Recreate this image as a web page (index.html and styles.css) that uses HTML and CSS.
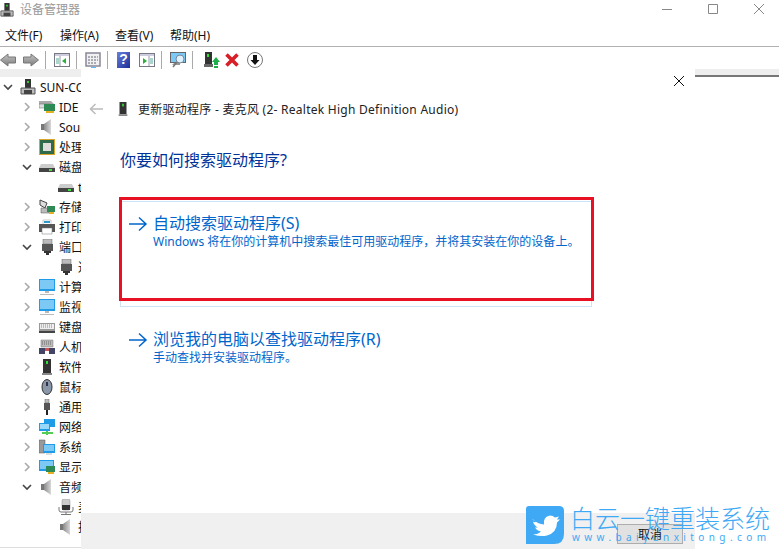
FILE: index.html
```html
<!DOCTYPE html>
<html lang="zh-CN">
<head>
  <meta charset="UTF-8">
  <title>设备管理器</title>
  <link rel="stylesheet" href="styles.css">
</head>
<body>
  <svg class="sprites" width="0" height="0">
    <defs>
      <linearGradient id="g-arrow" x1="0" y1="0" x2="0" y2="1"><stop offset="0" stop-color="#c4c4c4"/><stop offset="1" stop-color="#7d7d7d"/></linearGradient>
      <linearGradient id="g-help" x1="0" y1="0" x2="1" y2="1"><stop offset="0" stop-color="#6a80dc"/><stop offset="1" stop-color="#1b2f96"/></linearGradient>
      <linearGradient id="g-speaker" x1="0" y1="0" x2="1" y2="0"><stop offset="0" stop-color="#8a8a8a"/><stop offset="1" stop-color="#d8d8d8"/></linearGradient>
    </defs>
    <symbol id="i-pc" viewBox="0 0 16 16"><rect x="5" y="0" width="6" height="9" fill="#333"/><rect x="7" y="2" width="2" height="2" fill="#3c3"/><path d="M1 9h14v6H1z" fill="#bbb" stroke="#555"/><path d="M4 11h8v4H4z" fill="#444"/></symbol>
    <symbol id="i-tower" viewBox="0 0 16 16"><path d="M4 0h8v14H4z" fill="#333"/><rect x="7" y="2" width="2" height="3" fill="#3d3"/><path d="M3 14h10v2H3z" fill="#888"/></symbol>
    <symbol id="i-ide" viewBox="0 0 16 16"><path d="M0 2h12l3 3H0z" fill="#aaa"/><path d="M0 5h11v4H0z" fill="#ddd" stroke="#666" stroke-width=".5"/><rect x="5" y="5" width="11" height="7" fill="#2d8a55"/><rect x="7" y="12" width="8" height="2" fill="#e8b020"/></symbol>
    <symbol id="i-speaker" viewBox="0 0 16 16"><path d="M2 5h3v6H2z" fill="#777"/><path d="M5 5l7-5v16l-7-5z" fill="url(#g-speaker)"/></symbol>
    <symbol id="i-cpu" viewBox="0 0 16 16"><rect x="0" y="0" width="16" height="16" fill="#d9a52c"/><rect x="1" y="1" width="14" height="14" fill="#2f6b4a"/><rect x="4" y="4" width="8" height="8" fill="#ddd"/></symbol>
    <symbol id="i-disk" viewBox="0 0 16 16"><path d="M2 5h12l2 4H0z" fill="#ccc"/><path d="M0 9h16v4H0z" fill="#444"/><rect x="10" y="10" width="3" height="2" fill="#4d4"/></symbol>
    <symbol id="i-storage" viewBox="0 0 16 16"><path d="M1 1l7 3-2 5-5-3z" fill="#ddd" stroke="#444"/><path d="M2 9h8v5H2z" fill="#bbb" stroke="#555" stroke-width=".5"/><rect x="8" y="7" width="8" height="6" fill="#2d8a55"/><rect x="10" y="13" width="5" height="2" fill="#e8b020"/></symbol>
    <symbol id="i-printer" viewBox="0 0 16 16"><path d="M4 1h8v5H4z" fill="#fff" stroke="#999" stroke-width=".5"/><path d="M5 2h6v2H5z" fill="#39c"/><path d="M0 5h16v8H0z" fill="#555"/><path d="M3 9h10v6H3z" fill="#fff" stroke="#777" stroke-width=".5"/></symbol>
    <symbol id="i-port" viewBox="0 0 16 16"><path d="M4 0h9v5H4z" fill="#bbb" stroke="#666" stroke-width=".5"/><path d="M3 5h11v7H3z" fill="#555"/><path d="M5 12h7v2H5zM7 14h3v2H7z" fill="#333"/></symbol>
    <symbol id="i-monitor" viewBox="0 0 16 16"><rect x="0" y="0" width="16" height="12" fill="#1f9be8"/><rect x="1" y="1" width="14" height="9" fill="#7cc9f5"/><path d="M6 12h4v2H6zM1 15h14v1H1z" fill="#bbb"/></symbol>
    <symbol id="i-keyboard" viewBox="0 0 16 16"><path d="M0 4h16v9H0z" fill="#999"/><path d="M1 5h14v5H1z" fill="#eee"/><path d="M2 6h12M2 8h12" stroke="#888" stroke-dasharray="1 1"/><path d="M0 12h16v2H0z" fill="#444"/></symbol>
    <symbol id="i-hid" viewBox="0 0 16 16"><path d="M2 1h12v7H2z" fill="#bbb" stroke="#777" stroke-width=".5"/><path d="M3 3h10M3 5h10" stroke="#666" stroke-dasharray="1 1"/><path d="M0 9h6v6H0zM10 9h6v6h-6z" fill="#446"/><path d="M6 9h4v3H6z" fill="#c55"/></symbol>
    <symbol id="i-mouse" viewBox="0 0 16 16"><ellipse cx="8" cy="8" rx="5" ry="7.5" fill="#8a97a8" stroke="#333"/><rect x="7" y="3" width="2" height="4" fill="#334"/></symbol>
    <symbol id="i-usb" viewBox="0 0 16 16"><path d="M6 0h4v4H6z" fill="#bbb" stroke="#666" stroke-width=".5"/><path d="M5 4h6v7H5z" fill="#555"/><path d="M7 11h2v5H7z" fill="#222"/></symbol>
    <symbol id="i-net" viewBox="0 0 16 16"><rect x="5" y="0" width="11" height="8" fill="#1f9be8"/><rect x="0" y="4" width="11" height="8" fill="#1f9be8"/><rect x="1" y="5" width="9" height="5" fill="#9ad8fa"/><path d="M3 14h11M8 12v4" stroke="#5c5" stroke-width="2"/></symbol>
    <symbol id="i-sys" viewBox="0 0 16 16"><path d="M0 1h6v13H0z" fill="#999" stroke="#555" stroke-width=".5"/><rect x="4" y="5" width="12" height="9" fill="#1f9be8"/><rect x="5" y="6" width="10" height="6" fill="#7cc9f5"/><path d="M7 15h6" stroke="#bbb"/></symbol>
    <symbol id="i-display" viewBox="0 0 16 16"><rect x="0" y="1" width="15" height="11" fill="#1f9be8"/><rect x="1" y="2" width="13" height="8" fill="#7cc9f5"/><rect x="7" y="7" width="9" height="6" fill="#2d8a55"/><rect x="9" y="13" width="6" height="2" fill="#e8b020"/></symbol>
    <symbol id="i-mic" viewBox="0 0 16 16"><rect x="4" y="0" width="8" height="11" rx="2" fill="#ccc" stroke="#888" stroke-width=".5"/><rect x="4" y="6" width="8" height="5" fill="#333"/><path d="M1 8v3q0 2 2 2h10q2 0 2-2V8M8 13v2M3 15.5h10" fill="none" stroke="#777"/></symbol>
    <symbol id="i-back" viewBox="0 0 16 16"><path d="M.5 8L8 2v3h7.5v6H8v3z" fill="url(#g-arrow)" stroke="#777"/></symbol>
    <symbol id="i-forward" viewBox="0 0 16 16"><path d="M15.5 8L8 2v3H.5v6H8v3z" fill="url(#g-arrow)" stroke="#777"/></symbol>
    <symbol id="i-pane" viewBox="0 0 16 16"><rect x=".5" y="1.5" width="15" height="13" fill="#fff" stroke="#778"/><path d="M1 2h14v2H1z" fill="#ccd"/><path d="M6 4v10" stroke="#99a"/><path d="M2 7h3M2 9h3M2 11h3" stroke="#5a9"/><path d="M12 6v6l-4-3z" fill="#2fae3f"/></symbol>
    <symbol id="i-pane-r" viewBox="0 0 16 16"><rect x=".5" y="1.5" width="15" height="13" fill="#fff" stroke="#778"/><path d="M1 2h14v2H1z" fill="#ccd"/><path d="M10 4v10" stroke="#99a"/><path d="M4 6v6l4-3z" fill="#2fae3f"/><path d="M11 7h3M11 9h3M11 11h3" stroke="#5a9"/></symbol>
    <symbol id="i-props" viewBox="0 0 16 16"><rect x="1" y="1" width="14" height="13" fill="#f1f1f1" stroke="#889" stroke-width="1.5"/><path d="M3 5h10M3 8h10M3 11h8" stroke="#667" stroke-dasharray="2 1"/><path d="M6 15h5v1H6z" fill="#5bf"/></symbol>
    <symbol id="i-help" viewBox="0 0 13 16"><rect width="13" height="16" fill="url(#g-help)"/></symbol>
    <symbol id="i-scan" viewBox="0 0 16 16"><rect x=".5" y=".5" width="15" height="10" fill="#7cc9f5" stroke="#666"/><path d="M4 11h6v2H2z" fill="#999"/><circle cx="10" cy="7" r="4" fill="#dff2fc" stroke="#789"/><path d="M7 10l-4 5" stroke="#777" stroke-width="1.5"/></symbol>
    <symbol id="i-update" viewBox="0 0 16 16"><path d="M1 0h7v12H1z" fill="#333"/><rect x="3" y="2" width="2" height="3" fill="#3d3"/><path d="M0 12h9v3H0z" fill="#666"/><path d="M12 5l4 5h-2v3h-4v-3H8zM10 14h4v2h-4z" fill="#1cb04a"/></symbol>
    <symbol id="i-remove" viewBox="0 0 16 16"><path d="M2.5 2.5l11 11M13.5 2.5l-11 11" stroke="#d81e26" stroke-width="3.6"/></symbol>
    <symbol id="i-disable" viewBox="0 0 16 16"><circle cx="8" cy="8" r="7.5" fill="#fff" stroke="#777"/><path d="M6 3h4v5h2.5L8 13 3.5 8H6z" fill="#111"/></symbol>
    <symbol id="i-arrow" viewBox="0 0 20 16"><path d="M1 8h17M11 1.5L18 8l-7 6.5" fill="none" stroke="currentColor" stroke-width="1.5"/></symbol>
    <symbol id="i-caret-r" viewBox="0 0 16 16"><path d="M6 4l4 4-4 4" fill="none" stroke="#aaa" stroke-width="1.6"/></symbol>
    <symbol id="i-caret-d" viewBox="0 0 16 16"><path d="M4 6l4 4 4-4" fill="none" stroke="#444" stroke-width="1.6"/></symbol>
  </svg>

  <header class="titlebar">
    <div class="title">
      <svg class="title-icon"><use href="#i-pc"/></svg>
      <span>设备管理器</span>
    </div>
    <div class="win-controls">
      <svg viewBox="0 0 10 10"><path d="M0 5.5h10"/></svg>
      <svg viewBox="0 0 10 10"><path d="M.5 .5h9v9h-9z"/></svg>
      <svg viewBox="0 0 10 10"><path d="M0 0l10 10M10 0L0 10"/></svg>
    </div>
  </header>

  <nav class="menubar">
    <span>文件(F)</span>
    <span>操作(A)</span>
    <span>查看(V)</span>
    <span>帮助(H)</span>
  </nav>

  <div class="toolbar">
    <svg class="tool"><use href="#i-back"/></svg>
    <svg class="tool"><use href="#i-forward"/></svg>
    <i class="sep"></i>
    <svg class="tool"><use href="#i-pane"/></svg>
    <i class="sep"></i>
    <svg class="tool"><use href="#i-props"/></svg>
    <i class="sep"></i>
    <div class="help-btn"><svg class="tool-help"><use href="#i-help"/></svg><b>?</b></div>
    <svg class="tool"><use href="#i-pane-r"/></svg>
    <i class="sep"></i>
    <svg class="tool"><use href="#i-scan"/></svg>
    <i class="sep"></i>
    <svg class="tool update"><use href="#i-update"/></svg>
    <svg class="tool remove"><use href="#i-remove"/></svg>
    <svg class="tool"><use href="#i-disable"/></svg>
  </div>

  <main class="workspace">
    <aside class="left">
      <div class="strip"></div>
      <ul class="tree">
        <li class="lv0"><svg class="caret"><use href="#i-caret-d"/></svg><svg class="ico"><use href="#i-pc"/></svg><span>SUN-COMPUTER</span></li>
        <li class="lv1"><svg class="caret"><use href="#i-caret-r"/></svg><svg class="ico"><use href="#i-ide"/></svg><span>IDE ATA/ATAPI</span></li>
        <li class="lv1"><svg class="caret"><use href="#i-caret-r"/></svg><svg class="ico"><use href="#i-speaker"/></svg><span>Sound</span></li>
        <li class="lv1"><svg class="caret"><use href="#i-caret-r"/></svg><svg class="ico"><use href="#i-cpu"/></svg><span>处理器</span></li>
        <li class="lv1"><svg class="caret"><use href="#i-caret-d"/></svg><svg class="ico"><use href="#i-disk"/></svg><span>磁盘驱动器</span></li>
        <li class="lv2"><svg class="caret"></svg><svg class="ico"><use href="#i-disk"/></svg><span>t</span></li>
        <li class="lv1"><svg class="caret"><use href="#i-caret-r"/></svg><svg class="ico"><use href="#i-storage"/></svg><span>存储控制器</span></li>
        <li class="lv1"><svg class="caret"><use href="#i-caret-r"/></svg><svg class="ico"><use href="#i-printer"/></svg><span>打印队列</span></li>
        <li class="lv1"><svg class="caret"><use href="#i-caret-d"/></svg><svg class="ico"><use href="#i-port"/></svg><span>端口</span></li>
        <li class="lv2"><svg class="caret"></svg><svg class="ico"><use href="#i-port"/></svg><span>通信端口</span></li>
        <li class="lv1"><svg class="caret"><use href="#i-caret-r"/></svg><svg class="ico"><use href="#i-monitor"/></svg><span>计算机</span></li>
        <li class="lv1"><svg class="caret"><use href="#i-caret-r"/></svg><svg class="ico"><use href="#i-monitor"/></svg><span>监视器</span></li>
        <li class="lv1"><svg class="caret"><use href="#i-caret-r"/></svg><svg class="ico"><use href="#i-keyboard"/></svg><span>键盘</span></li>
        <li class="lv1"><svg class="caret"><use href="#i-caret-r"/></svg><svg class="ico"><use href="#i-hid"/></svg><span>人机接口</span></li>
        <li class="lv1"><svg class="caret"><use href="#i-caret-r"/></svg><svg class="ico"><use href="#i-tower"/></svg><span>软件设备</span></li>
        <li class="lv1"><svg class="caret"><use href="#i-caret-r"/></svg><svg class="ico"><use href="#i-mouse"/></svg><span>鼠标</span></li>
        <li class="lv1"><svg class="caret"><use href="#i-caret-r"/></svg><svg class="ico"><use href="#i-usb"/></svg><span>通用串行</span></li>
        <li class="lv1"><svg class="caret"><use href="#i-caret-r"/></svg><svg class="ico"><use href="#i-net"/></svg><span>网络适配器</span></li>
        <li class="lv1"><svg class="caret"><use href="#i-caret-r"/></svg><svg class="ico"><use href="#i-sys"/></svg><span>系统设备</span></li>
        <li class="lv1"><svg class="caret"><use href="#i-caret-r"/></svg><svg class="ico"><use href="#i-display"/></svg><span>显示适配器</span></li>
        <li class="lv1"><svg class="caret"><use href="#i-caret-d"/></svg><svg class="ico"><use href="#i-speaker"/></svg><span>音频输入</span></li>
        <li class="lv2"><svg class="caret"></svg><svg class="ico"><use href="#i-mic"/></svg><span>麦克风</span></li>
        <li class="lv2"><svg class="caret"></svg><svg class="ico"><use href="#i-speaker"/></svg><span>扬声器</span></li>
      </ul>
    </aside>

    <section class="dialog">
      <div class="dialog-close"><svg viewBox="0 0 10 10"><path d="M0 0l10 10M10 0L0 10"/></svg></div>
      <div class="dialog-head">
        <svg class="back" viewBox="0 0 14 12"><path d="M14 6H1.5M6.5 1L1.5 6l5 5"/></svg>
        <svg class="head-ico"><use href="#i-tower"/></svg>
        <span>更新驱动程序 - 麦克风 (2- Realtek High Definition Audio)</span>
      </div>
      <div class="dialog-body">
        <h2>你要如何搜索驱动程序?</h2>
        <div class="option first">
          <svg class="arrow"><use href="#i-arrow"/></svg>
          <div>
            <div class="opt-title">自动搜索驱动程序(S)</div>
            <div class="opt-desc">Windows 将在你的计算机中搜索最佳可用驱动程序，并将其安装在你的设备上。</div>
          </div>
          <div class="highlight"></div>
        </div>
        <div class="option">
          <svg class="arrow"><use href="#i-arrow"/></svg>
          <div>
            <div class="opt-title">浏览我的电脑以查找驱动程序(R)</div>
            <div class="opt-desc">手动查找并安装驱动程序。</div>
          </div>
        </div>
      </div>
      <footer class="dialog-foot"><button>取消</button></footer>
    </section>

    <aside class="right">
      <div class="strip dark"></div>
    </aside>
  </main>

  <div class="watermark">
    <svg class="wm-logo" viewBox="0 0 38 38">
      <path d="M3 0H33Q38 0 38 5V28Q38 38 28 38H0V3Q0 0 3 0Z" fill="#3fa9f5"/>
      <path d="M6 13q6 5 12 5.5q-1-8 6-9q3 0 5 2l4-1-2 3 3 0-3 3q0 10-10 13q-6 1.5-14-1q5 0 8-3q-4-.5-6-4h3q-4-2-5-6q1 1 3 .5q-3-3-4-3z" fill="#fff"/>
    </svg>
    <div>
      <div class="wm-name">白云一键重装系统</div>
      <div class="wm-url">www.baiyunxitong.com</div>
    </div>
  </div>
</body>
</html>
```

FILE: styles.css
```css
* { box-sizing: border-box; }
html, body { margin: 0; padding: 0; }
body { width: 779px; height: 549px; overflow: hidden; position: relative; background: #fff; color: #111; font-family: "Noto Sans", "Noto Sans CJK SC", sans-serif; font-size: 12px; }
.sprites { position: absolute; }

.titlebar { height: 20px; display: flex; justify-content: space-between; }
.title { display: flex; align-items: center; color: #999; font-size: 12px; padding-bottom: 2px; }
.title-icon { width: 14px; height: 16px; margin: 2px 6px 0 0; }
.win-controls { display: flex; padding: 4px 15px 0 0; gap: 36px; }
.win-controls svg { width: 10px; height: 10px; fill: none; stroke: #888; }

.menubar { height: 27px; display: flex; align-items: center; padding: 4px 0 0 5px; border-bottom: 1px solid #b0b0b0; }
.menubar span { width: 55px; flex: none; }

.toolbar { height: 22px; display: flex; align-items: center; padding-top: 4px; }
.tool { width: 16px; height: 16px; margin-left: 7px; flex: none; }
.tool:first-child { margin-left: 0; }
.sep { width: 1px; height: 18px; background: #aaa; margin: 0 0 0 6px; flex: none; }
.sep + .tool { margin-left: 8px; }
.sep + .tool.update { margin-left: 11px; }
.tool.remove { margin-left: 4px; }
.help-btn { position: relative; width: 13px; height: 16px; margin-left: 9px; }
.tool-help { width: 13px; height: 16px; display: block; }
.help-btn b { position: absolute; left: 0; right: 0; top: -1px; text-align: center; color: #fff; font: bold 14px "Liberation Sans", sans-serif; }
.help-btn + .tool { margin-left: 9px; }

.workspace { display: flex; height: 480px; }
.left { width: 81px; flex: none; border-bottom: 1px solid #ddd; height: 479px; overflow: hidden; }
.right { flex: 1; }
.strip { height: 8px; background: #eee; }
.strip.dark { border-bottom: 2px solid #777; }

.tree { list-style: none; margin: 0; padding: 0; }
.tree li { height: 20px; display: flex; align-items: center; white-space: nowrap; overflow: hidden; }
.lv1 { padding-left: 19px; }
.lv2 { padding-left: 38px; }
.caret, .ico { width: 16px; height: 16px; flex: none; }
.ico { margin: 0 4px; }

.dialog { width: 614px; flex: none; display: flex; flex-direction: column; background: #fff; }
.dialog-close { height: 24px; display: flex; justify-content: flex-end; padding: 7px 11px 0 0; }
.dialog-close svg { width: 10px; height: 10px; fill: none; stroke: #111; }
.dialog-head { display: flex; align-items: center; height: 24px; margin-top: 4px; padding-left: 8px; color: #222; font-size: 12px; letter-spacing: .26px; }
.back { width: 14px; height: 12px; fill: none; stroke: #bbb; stroke-width: 1.5; }
.head-ico { width: 14px; height: 16px; margin: 0 8px 0 13px; }
.dialog-body { flex: 1; padding: 0 0 0 39px; }
h2 { margin: 28px 0 30px; font-size: 16px; line-height: 22px; font-weight: 400; color: #003399; }
.option { position: relative; width: 472px; display: flex; color: #0066cc; padding: 11px 8px; }
.option.first { height: 106px; border: 1px solid #cce4f7; padding: 9px 7px; margin-bottom: 9px; }
.arrow { width: 20px; height: 16px; margin: 5px 5px 0 0; flex: none; }
.opt-title { font-size: 16px; line-height: 24px; }
.opt-desc { font-size: 12px; line-height: 16px; margin-top: -1px; }
.highlight { position: absolute; left: -2px; top: -5px; width: 475px; height: 104px; border: 3px solid #e81123; }
.dialog-foot { height: 36px; background: #f0f0f0; display: flex; justify-content: flex-end; padding: 11px 12px 0 0; }
.dialog-foot button { width: 66px; height: 20px; padding: 0; border: 1px solid #adadad; background: #e1e1e1; color: #111; font: inherit; }

.watermark { position: absolute; left: 526px; top: 506px; display: flex; gap: 6px; color: #3fa9f5; }
.wm-logo { width: 38px; height: 38px; flex: none; }
.wm-name { font-size: 25px; line-height: 24px; font-weight: 300; white-space: nowrap; }
.wm-url { font-size: 10px; line-height: 12px; letter-spacing: 4.4px; margin: 1px 0 0 2px; white-space: nowrap; }
```
